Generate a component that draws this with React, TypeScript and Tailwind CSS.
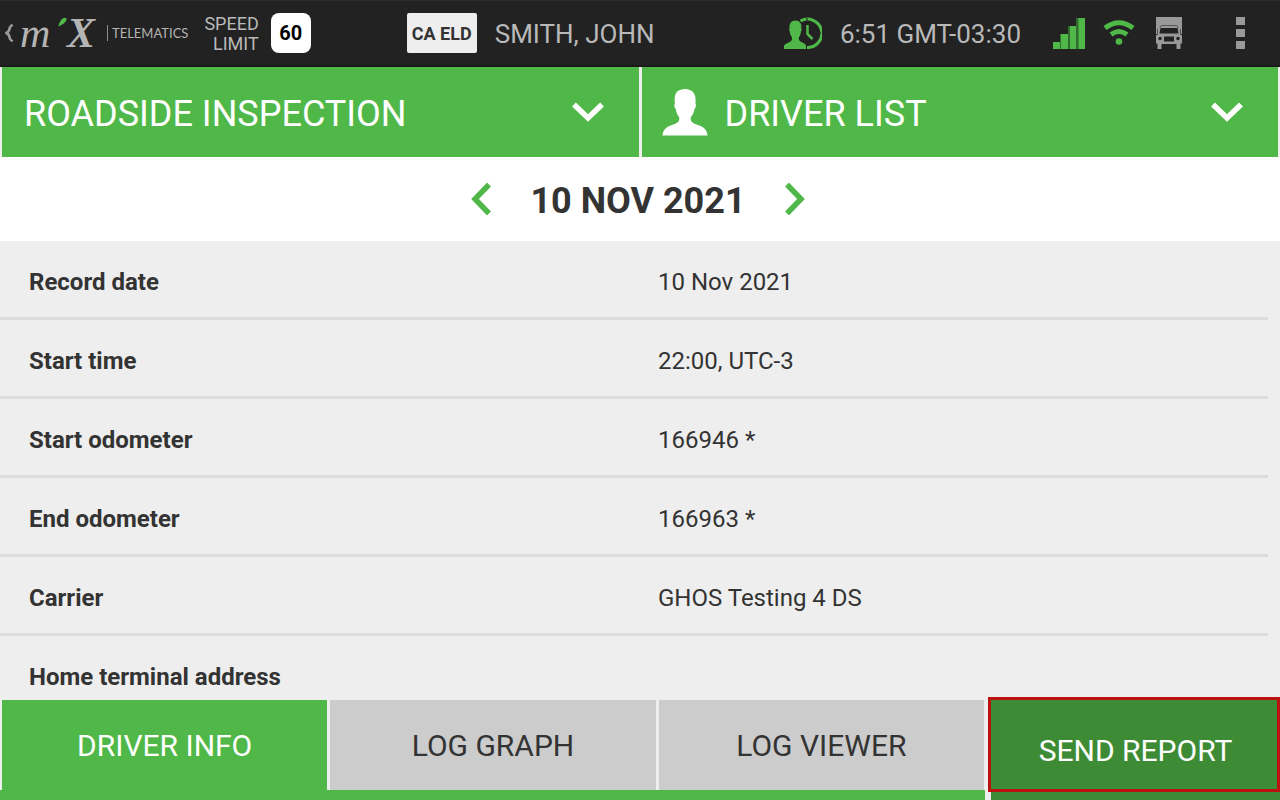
import { useState } from "react";

const RECORDS = [
  { label: "Record date", value: "10 Nov 2021" },
  { label: "Start time", value: "22:00, UTC-3" },
  { label: "Start odometer", value: "166946 *" },
  { label: "End odometer", value: "166963 *" },
  { label: "Carrier", value: "GHOS Testing 4 DS" },
  { label: "Home terminal address", value: "" },
];

const TABS = ["DRIVER INFO", "LOG GRAPH", "LOG VIEWER"];

function ChevronDown() {
  return (
    <svg width="32" height="20" viewBox="0 0 32 20" fill="none" aria-hidden="true">
      <path d="M2 2.5 16 16 30 2.5" stroke="#fff" strokeWidth="5.5" />
    </svg>
  );
}

function Logo() {
  return (
    <button className="flex items-center text-[#b4b4b4]" aria-label="Back">
      <svg width="9" height="18" viewBox="0 0 9 18" fill="none" aria-hidden="true">
        <path d="M7.5 .5 4.800 3.500Q4.500 7.500 1.500 9 4.500 10.500 4.800 14.500L7.5 17.500" stroke="#999" strokeWidth="2.6" />
      </svg>
      <span className="relative ml-1.5 flex w-[75px] items-center justify-between font-['Liberation_Serif',serif] text-[42px] leading-10 italic">
        <span>m</span>
        <span className="font-bold">X</span>
        <svg className="absolute left-[38px] top-1" width="9" height="10" viewBox="0 0 9 10" aria-hidden="true">
          <path d="M.5 9.500Q1.500 3 5.500 1 9 0 8.500 3 7 6.500 .5 9.500Z" fill="#50b848" />
        </svg>
      </span>
      <span className="ml-3 border-l border-[#8f8f8f] pl-1 font-['Lato',sans-serif] text-[13px] leading-4">
        TELEMATICS
      </span>
    </button>
  );
}

function DriverClockIcon() {
  return (
    <svg width="38" height="32" viewBox="0 0 38 32" fill="none" aria-hidden="true">
      <path d="M16.500 4A14.200 14.200 0 1 1 23 30.500" stroke="#50b848" strokeWidth="3" />
      <path d="M23.500 8V17L28.500 22" stroke="#50b848" strokeWidth="2.500" />
      <path d="M34 16H37M23 1V4" stroke="#222" strokeWidth="1" />
      <path
        d="M0 32V28.500Q2 26.500 6.500 24.500 8.500 23.500 8 20.500 6 18 5.800 14.500 4.500 13 5.500 11 5 3.500 11.500 3.500 18 3.500 17.300 11 18.300 13 17 14.500 16.800 18 14.800 20.500 14.500 23.500 16.500 24.500 21 26.500 22 28.500V32Z"
        fill="#50b848"
      />
    </svg>
  );
}

function SignalIcon() {
  return (
    <svg width="32" height="32" viewBox="0 0 32 32" aria-hidden="true">
      <path d="M7 25V17H15V9H23V1H26V32H7Z" fill="#326b2e" />
      <path d="M0 25H7V32H0ZM8 17H15V32H8ZM17 9H23V32H17ZM25.500 1H32V32H25.500Z" fill="#50b848" />
    </svg>
  );
}

function WifiIcon() {
  return (
    <svg width="32" height="26" viewBox="0 0 32 26" fill="none" aria-hidden="true">
      <path d="M2 8Q16-2.500 30 8" stroke="#50b848" strokeWidth="5" />
      <path d="M8 14.500Q16 8.500 24 14.500" stroke="#50b848" strokeWidth="5" />
      <circle cx="16" cy="21.500" r="3.300" fill="#50b848" />
    </svg>
  );
}

function TruckIcon() {
  return (
    <svg width="26" height="32" viewBox="0 0 26 32" fill="none" aria-hidden="true">
      <path d="M0 0H26V26.500H24.500V32H20.500V27H5.500V32H1.500V26.500H0Z" fill="#999" />
      <path d="M1.500 17V12M24.500 17V12M4 11Q4 8.500 6 8.500H20Q22 8.500 22 11" stroke="#555" strokeWidth="1" />
      <path d="M4.500 11H21.500L22.500 16.500H3.500Z" fill="#222" />
      <path d="M8 19.500H18V24.500H8Z" fill="#222" />
      <circle cx="4" cy="21.500" r="1.700" fill="#222" />
      <circle cx="22" cy="21.500" r="1.700" fill="#222" />
      <path d="M0 17.500H1.500M24.500 17.500H26" stroke="#222" />
    </svg>
  );
}

function MenuIcon() {
  return (
    <svg width="9" height="32" viewBox="0 0 9 32" aria-hidden="true">
      <path d="M0 0H9V8H0ZM0 12H9V20H0ZM0 24H9V32H0Z" fill="#999" />
    </svg>
  );
}

function PersonIcon() {
  return (
    <svg width="46" height="48" viewBox="0 0 46 48" aria-hidden="true">
      <path
        d="M.5 47.500C1 41 5 38.500 12 36.200 16 34.800 17.500 33.500 17.300 29.500 15 26.500 14.200 24 13.800 21 12 19.500 12 17 12.800 15.500 12 6 14 1.500 22.500 1 31 1 34.500 6 33.500 15.500 34.300 17 34 19.500 32.500 21 32 24 31 26.500 28.700 29.500 28.500 33.500 30 34.800 34 36.200 41 38.500 45 41 45.500 47.500Z"
        fill="#fff"
      />
    </svg>
  );
}

function TopBar() {
  return (
    <header className="flex h-[67px] shrink-0 items-center border-t border-b-2 border-t-[#2d2d2d] border-b-[#1a1a1a] bg-[#222] px-[5px] text-[26px] text-[#b9b9b9]">
      <Logo />
      <div className="ml-4 pt-0.5 text-right text-[18px] leading-5">
        SPEED
        <br />
        LIMIT
      </div>
      <div className="ml-3 flex size-10 items-center justify-center rounded-lg bg-white text-xl font-bold text-black">
        60
      </div>
      <div className="ml-24 flex h-10 w-[70px] items-center justify-center rounded-xs bg-[#eee] font-['Liberation_Sans_Narrow',Roboto,sans-serif] text-[18px] font-bold text-[#333]">
        CA ELD
      </div>
      <div className="ml-[18px] pt-0.5">SMITH, JOHN</div>
      <div className="ml-auto flex items-center">
        <DriverClockIcon />
        <span className="ml-[18px] mr-8 pt-0.5">6:51 GMT-03:30</span>
        <div className="flex items-center gap-[18px]">
          <SignalIcon />
          <WifiIcon />
        </div>
        <div className="ml-[21px] mr-[30px] flex items-center gap-[54px]">
          <TruckIcon />
          <button aria-label="Menu">
            <MenuIcon />
          </button>
        </div>
      </div>
    </header>
  );
}

export default function App() {
  const [tab, setTab] = useState(TABS[0]);

  return (
    <div className="flex h-screen flex-col overflow-hidden bg-[#eee] font-['Roboto',sans-serif] text-[#333]">
      <TopBar />

      <nav className="grid h-[90px] shrink-0 grid-cols-2 gap-[3px] px-0.5 text-4xl text-white">
        <button className="flex items-center justify-between bg-[#50b848] pl-[22px] pr-[35px]" aria-haspopup="menu">
          <span className="pt-1">ROADSIDE INSPECTION</span>
          <ChevronDown />
        </button>
        <button className="flex items-center bg-[#50b848] pl-5 pr-[35px]" aria-haspopup="menu">
          <PersonIcon />
          <span className="ml-[17px] flex-1 pt-1 text-left">DRIVER LIST</span>
          <ChevronDown />
        </button>
      </nav>

      {/* Day picker */}
      <div className="flex h-[84px] shrink-0 items-center justify-center gap-[39px] bg-white pr-1">
        <button aria-label="Previous day">
          <svg width="20" height="32" viewBox="0 0 20 32" fill="none" aria-hidden="true">
            <path d="M18 1.500 4 16 18 30.500" stroke="#50b848" strokeWidth="5.500" />
          </svg>
        </button>
        <h1 className="pt-1 text-4xl font-bold">10 NOV 2021</h1>
        <button aria-label="Next day">
          <svg width="20" height="32" viewBox="0 0 20 32" fill="none" aria-hidden="true">
            <path d="M2 1.500 16 16 2 30.500" stroke="#50b848" strokeWidth="5.500" />
          </svg>
        </button>
      </div>

      <main className="min-h-0 flex-1 overflow-hidden pr-3">
        <table className="w-full table-fixed border-separate border-spacing-0 text-left text-2xl">
          <tbody>
            {RECORDS.map(({ label, value }) => (
              <tr key={label} className="h-[79px]">
                <th scope="row" className="border-b-[3px] border-[#dcdcdc] pl-[29px] pt-1.5 font-bold">
                  {label}
                </th>
                <td className="border-b-[3px] border-[#dcdcdc] pl-6 pt-1.5">{value}</td>
              </tr>
            ))}
          </tbody>
        </table>
      </main>

      <footer className="flex h-[100px] shrink-0 gap-1.5 text-3xl">
        <div className="grid flex-1 grid-cols-3 gap-[3px] border-b-10 border-[#50b848] pl-0.5 pr-px" role="tablist">
          {TABS.map((name) => (
            <button
              key={name}
              role="tab"
              aria-selected={name === tab}
              onClick={() => setTab(name)}
              className={name === tab ? "bg-[#50b848] pt-0.5 text-white" : "bg-[#ccc] pt-0.5"}>
              {name}
            </button>
          ))}
        </div>
        <button className="relative w-[289px] bg-[#3d8c35] pt-0.5 text-white">
          SEND REPORT
          <span className="absolute -left-[3px] -top-[3px] bottom-2 right-0 border-[3px] border-[#bb1111]" />
        </button>
      </footer>
    </div>
  );
}
